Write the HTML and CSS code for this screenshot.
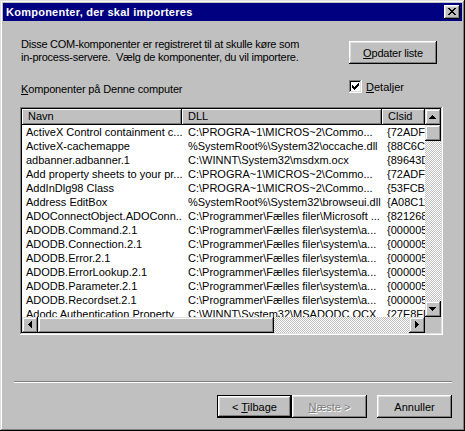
FILE: index.html
```html
<!DOCTYPE html>
<html lang="da">
<head>
	<meta charset="UTF-8">
	<meta name="viewport" content="width=device-width, initial-scale=1.0">
	<title>Komponenter, der skal importeres</title>
	<link rel="stylesheet" href="styles.css">
</head>
<body>
	<div class="window">
		<div class="titlebar">
			<span class="title">Komponenter, der skal importeres</span>
			<div class="close">
				<svg width="16" height="14" viewBox="0 0 16 14" shape-rendering="crispEdges"><path d="M4 3h2v1H4zM10 3h2v1h-2zM5 4h2v1H5zM9 4h2v1H9zM6 5h4v1H6zM7 6h2v1H7zM6 7h4v1H6zM5 8h2v1H5zM9 8h2v1H9zM4 9h2v1H4zM10 9h2v1h-2z" fill="#000"/></svg>
			</div>
		</div>

		<div class="content">
			<div class="intro">
				<p>Disse COM-komponenter er registreret til at skulle køre som<br>in-process-servere.&nbsp; Vælg de komponenter, du vil importere.</p>
				<button class="btn refresh"><u>O</u>pdater liste</button>
			</div>

			<div class="options">
				<span class="label"><u>K</u>omponenter på Denne computer</span>
				<label class="check">
					<span class="box"><svg width="13" height="13" viewBox="0 0 13 13" shape-rendering="crispEdges"><path d="M3 5h1v3H3zM4 6h1v3H4zM5 7h1v3H5zM6 6h1v3H6zM7 5h1v3H7zM8 4h1v3H8zM9 3h1v3H9z" fill="#000"/></svg></span>
					<span><u>D</u>etaljer</span>
				</label>
			</div>

			<div class="list">
				<div class="view">
					<div class="head">
						<span>Navn</span><span>DLL</span><span>Clsid</span>
					</div>
					<div class="row"><span>ActiveX Control containment c...</span><span>C:\PROGRA~1\MICROS~2\Commo...</span><span>{72ADFD7E</span></div>
					<div class="row"><span>ActiveX-cachemappe</span><span>%SystemRoot%\System32\occache.dll</span><span>{88C6C381</span></div>
					<div class="row"><span>adbanner.adbanner.1</span><span>C:\WINNT\System32\msdxm.ocx</span><span>{89643D21</span></div>
					<div class="row"><span>Add property sheets to your pr...</span><span>C:\PROGRA~1\MICROS~2\Commo...</span><span>{72ADFD54</span></div>
					<div class="row"><span>AddInDlg98 Class</span><span>C:\PROGRA~1\MICROS~2\Commo...</span><span>{53FCB2E0</span></div>
					<div class="row"><span>Address EditBox</span><span>%SystemRoot%\System32\browseui.dll</span><span>{A08C11D2</span></div>
					<div class="row"><span>ADOConnectObject.ADOConn...</span><span>C:\Programmer\Fælles filer\Microsoft ...</span><span>{82126834</span></div>
					<div class="row"><span>ADODB.Command.2.1</span><span>C:\Programmer\Fælles filer\system\a...</span><span>{00000507</span></div>
					<div class="row"><span>ADODB.Connection.2.1</span><span>C:\Programmer\Fælles filer\system\a...</span><span>{00000514</span></div>
					<div class="row"><span>ADODB.Error.2.1</span><span>C:\Programmer\Fælles filer\system\a...</span><span>{00000541</span></div>
					<div class="row"><span>ADODB.ErrorLookup.2.1</span><span>C:\Programmer\Fælles filer\system\a...</span><span>{00000542</span></div>
					<div class="row"><span>ADODB.Parameter.2.1</span><span>C:\Programmer\Fælles filer\system\a...</span><span>{0000050B</span></div>
					<div class="row"><span>ADODB.Recordset.2.1</span><span>C:\Programmer\Fælles filer\system\a...</span><span>{00000535</span></div>
					<div class="row"><span>Adodc Authentication Property</span><span>C:\WINNT\System32\MSADODC.OCX</span><span>{27E8FD2F</span></div>
				</div>

				<div class="vscroll">
					<div class="arrow"><svg width="16" height="16" viewBox="0 0 16 16" shape-rendering="crispEdges"><path d="M7 6h1v1h1v1h1v1h1v1H4V9h1V8h1V7h1z"/></svg></div>
					<div class="track"><div class="thumb"></div></div>
					<div class="arrow"><svg width="16" height="16" viewBox="0 0 16 16" shape-rendering="crispEdges"><path d="M4 6h7v1h-1v1h-1v1h-1v1H7V9H6V8H5V7H4z"/></svg></div>
				</div>

				<div class="hscroll">
					<div class="arrow"><svg width="16" height="16" viewBox="0 0 16 16" shape-rendering="crispEdges"><path d="M6 7h1V6h1V5h1V4h1v7H9v-1H8V9H7V8H6z"/></svg></div>
					<div class="track"><div class="thumb"></div></div>
					<div class="arrow"><svg width="16" height="16" viewBox="0 0 16 16" shape-rendering="crispEdges"><path d="M6 4h1v1h1v1h1v1h1v1H9v1H8v1H7v1H6z"/></svg></div>
				</div>

				<div class="corner"></div>
			</div>
		</div>

		<div class="footer">
			<div class="separator"></div>
			<div class="buttons">
				<button class="btn default">&lt; <u>T</u>ilbage</button>
				<button class="btn" disabled><u>N</u>æste &gt;</button>
				<button class="btn cancel">Annuller</button>
			</div>
		</div>
	</div>
</body>
</html>
```

FILE: styles.css
```css
body {
	margin: 0;
	background: #c0c0c0;
	font-family: "Liberation Sans", Arial, sans-serif;
	font-size: 11px;
	color: #000;
}

/* dialog frame */
.window {
	width: 465px;
	height: 431px;
	box-sizing: border-box;
	padding: 3px;
	background: #c0c0c0;
	box-shadow: inset -1px -1px #000, inset 1px 1px #dfdfdf, inset -2px -2px #808080, inset 2px 2px #fff;
}

.titlebar {
	height: 18px;
	display: flex;
	align-items: center;
	justify-content: space-between;
	padding: 0 2px 0 3px;
	background: #000080;
	color: #fff;
	font-weight: bold;
}
.title {
	letter-spacing: 0.25px;
}
.close {
	width: 16px;
	height: 14px;
	background: #c0c0c0;
	box-shadow: inset -1px -1px #000, inset 1px 1px #fff, inset -2px -2px #808080, inset 2px 2px #dfdfdf;
}
.close svg {
	display: block;
}

/* buttons */
.btn {
	font: inherit;
	color: #000;
	width: 75px;
	height: 23px;
	padding: 0;
	border: none;
	background: #c0c0c0;
	box-shadow: inset -1px -1px #000, inset 1px 1px #fff, inset -2px -2px #808080, inset 2px 2px #dfdfdf;
}
.btn.default {
	box-shadow: inset -2px -2px #000, inset 1px 1px #000, inset 2px 2px #fff, inset -3px -3px #808080, inset 3px 3px #dfdfdf;
}
.btn:disabled {
	color: #808080;
	text-shadow: 1px 1px #fff;
}

.content {
	padding: 17px 19px 0 17px;
}
.intro {
	display: flex;
	justify-content: space-between;
	align-items: flex-start;
}
.intro p {
	margin: 0 0 0 1px;
	line-height: 13px;
	letter-spacing: -0.25px;
}
.refresh {
	width: 88px;
	margin: 3px 6px 0 0;
	letter-spacing: -0.2px;
}

.options {
	display: flex;
	justify-content: space-between;
	align-items: flex-start;
	margin-top: 16px;
	line-height: 13px;
}
.label {
	margin: 3px 0 0 1px;
	letter-spacing: -0.15px;
}
.check {
	display: flex;
	align-items: flex-start;
	gap: 4px;
	width: 88px;
	margin-right: 6px;
}
.check span:last-child {
	margin-top: 1px;
}
.box {
	width: 13px;
	height: 13px;
	background: #fff;
	box-shadow: inset -1px -1px #fff, inset 1px 1px #808080, inset -2px -2px #dfdfdf, inset 2px 2px #000;
}
.box svg {
	display: block;
}

/* list view */
.list {
	margin-top: 11px;
	height: 228px;
	box-sizing: border-box;
	padding: 2px;
	background: #fff;
	box-shadow: inset -1px -1px #fff, inset 1px 1px #808080, inset -2px -2px #dfdfdf, inset 2px 2px #000;
	display: grid;
	grid-template-columns: 1fr 16px;
	grid-template-rows: 1fr 16px;
}
.view {
	overflow: hidden;
	white-space: nowrap;
}
.head {
	display: flex;
	height: 16px;
	line-height: 15px;
}
.head span {
	flex: none;
	box-sizing: border-box;
	padding-left: 6px;
	background: #c0c0c0;
	box-shadow: inset -1px -1px #000, inset 1px 1px #fff, inset -2px -2px #808080;
}
.row {
	display: flex;
	height: 14px;
	line-height: 14px;
}
.row span {
	flex: none;
	box-sizing: border-box;
	overflow: hidden;
}
.head span:nth-child(1), .row span:nth-child(1) {
	width: 160px;
}
.head span:nth-child(2), .row span:nth-child(2) {
	width: 200px;
}
.head span:nth-child(3), .row span:nth-child(3) {
	width: 43px;
}
.row span:nth-child(1) {
	padding-left: 4px;
}
.row span:nth-child(2) {
	padding-left: 6px;
}
.row span:nth-child(3) {
	padding-left: 5px;
}

/* scrollbars */
.vscroll, .hscroll {
	display: flex;
}
.vscroll {
	flex-direction: column;
}
.arrow, .thumb {
	flex: none;
	width: 16px;
	height: 16px;
	background: #c0c0c0;
	box-shadow: inset -1px -1px #000, inset 1px 1px #dfdfdf, inset -2px -2px #808080, inset 2px 2px #fff;
}
.arrow svg {
	display: block;
}
.track {
	flex: 1;
	display: flex;
	background: repeating-conic-gradient(#c0c0c0 0 25%, #fff 0 50%) 0 0 / 2px 2px;
}
.vscroll .track {
	flex-direction: column;
}
.hscroll .thumb {
	width: 236px;
}
.corner {
	background: #c0c0c0;
}

/* bottom buttons */
.footer {
	margin-top: 46px;
}
.separator {
	margin: 0 10px 0 11px;
	border-top: 1px solid #808080;
	border-bottom: 1px solid #fff;
}
.buttons {
	display: flex;
	justify-content: flex-end;
	margin-top: 12px;
	padding-right: 10px;
}
.cancel {
	margin-left: 10px;
}
```
